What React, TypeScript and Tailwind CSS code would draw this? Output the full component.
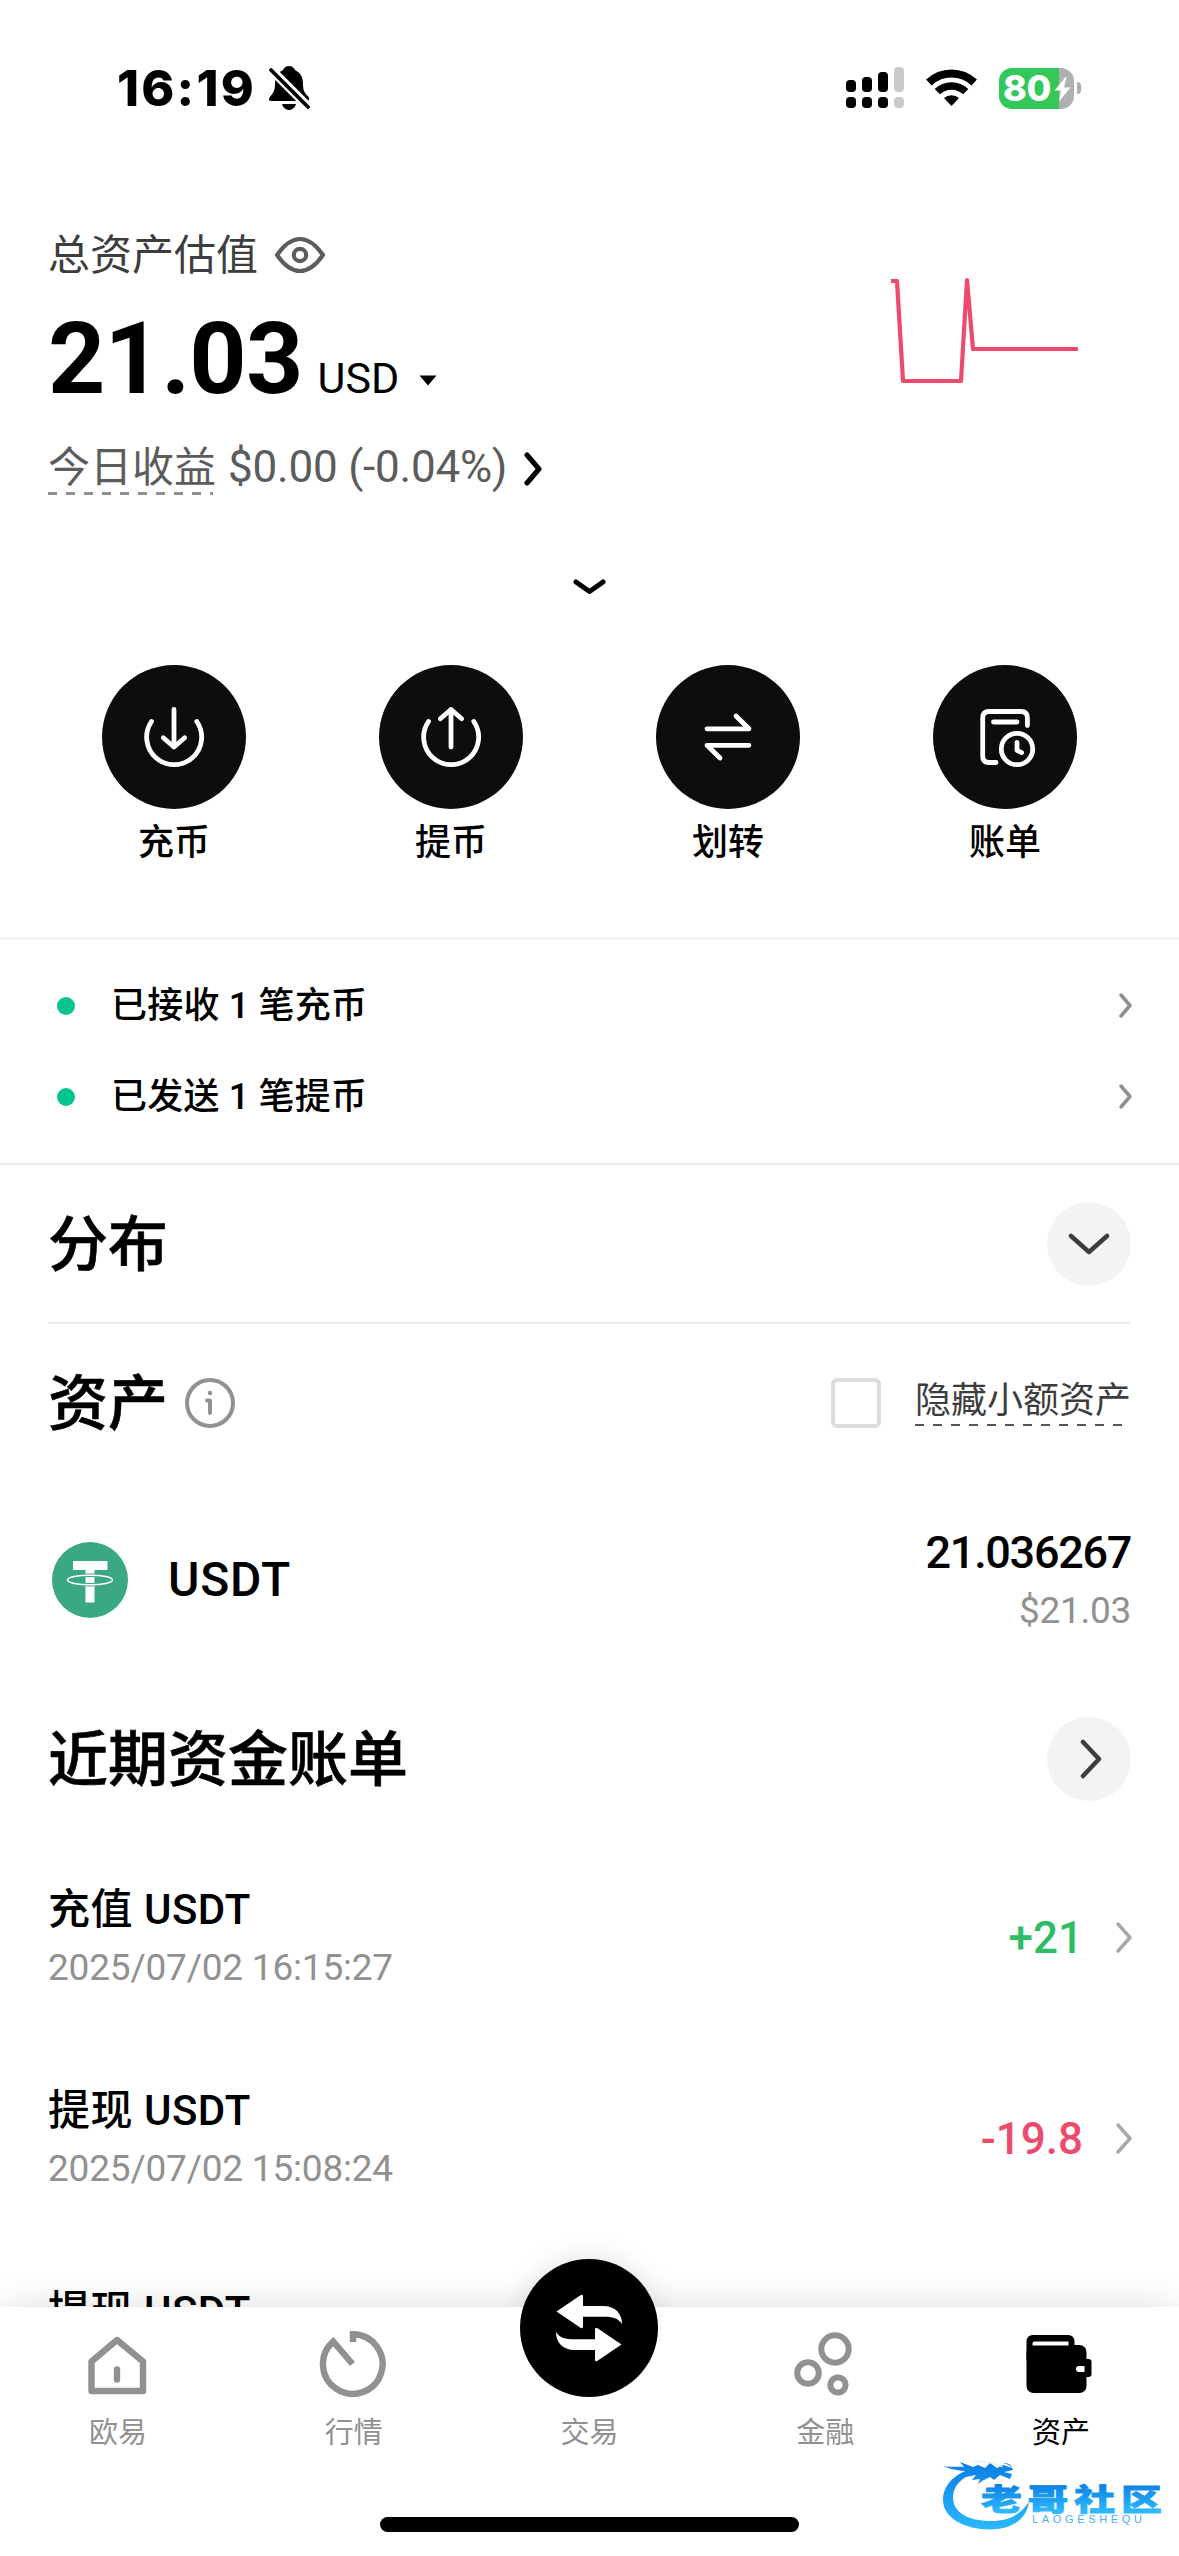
import { ReactNode } from "react";

const actions = [
    { label: "充币", icon: <DepositIcon /> },
    { label: "提币", icon: <WithdrawIcon /> },
    { label: "划转", icon: <TransferIcon /> },
    { label: "账单", icon: <BillIcon /> },
];

const notices = ["已接收 1 笔充币", "已发送 1 笔提币"];

const bills = [
    { title: "充值 USDT", time: "2025/07/02 16:15:27", amount: "+21", up: true },
    { title: "提现 USDT", time: "2025/07/02 15:08:24", amount: "-19.8", up: false },
    { title: "提现 USDT", time: "", amount: "", up: false },
];

function DepositIcon() {
    return (
        <svg width="144" height="144" viewBox="102 665 144 144" fill="none" stroke="#fff" strokeWidth="4.8" strokeLinecap="round" strokeLinejoin="round">
            <path d="M151.5 721.5A27.5 27.5 0 1 0 196.8 721.5" />
            <path d="M174 709.5V747M163.3 737.7L174 747L184.7 737.7" />
        </svg>
    );
}

function WithdrawIcon() {
    return (
        <svg width="144" height="144" viewBox="102 665 144 144" fill="none" stroke="#fff" strokeWidth="4.8" strokeLinecap="round" strokeLinejoin="round">
            <path d="M151.5 721.5A27.5 27.5 0 1 0 196.8 721.5" />
            <path d="M174 747V709.5M163.3 718.8L174 709.5L184.7 718.8" />
        </svg>
    );
}

function TransferIcon() {
    return (
        <svg width="144" height="144" viewBox="656 665 144 144" fill="none" stroke="#fff" strokeWidth="4.8" strokeLinecap="round" strokeLinejoin="round">
            <path d="M707 728.8H749L736 716M749 745.3H707L720 758" />
        </svg>
    );
}

function BillIcon() {
    return (
        <svg width="144" height="144" viewBox="933 665 144 144" fill="none" stroke="#fff" strokeWidth="4.8" strokeLinecap="round" strokeLinejoin="round">
            <path d="M996 762.5H989Q982.7 762.5 982.7 756V718Q982.7 711.5 989 711.5H1021Q1027.4 711.5 1027.4 718V725.5" />
            <path d="M993.5 722H1017" />
            <circle cx="1017" cy="749" r="15.7" />
            <path d="M1017 742.5V750.3L1021.6 752.7" />
        </svg>
    );
}

function Chevron({ width, height, className }: { width: number; height: number; className: string }) {
    // 3px of padding keeps the round caps inside the box
    return (
        <svg
            width={width}
            height={height}
            viewBox={`0 0 ${width} ${height}`}
            fill="none"
            stroke="currentColor"
            strokeLinecap="round"
            strokeLinejoin="round"
            className={className}
        >
            <path d={`M3 3L${width - 3} ${height / 2}L3 ${height - 3}`} />
        </svg>
    );
}

function StatusBar() {
    return (
        <div className="flex h-[176px] items-center justify-between pl-[117px] pr-[98px]">
            <div className="flex items-center">
                <span className="w-[151px] whitespace-nowrap font-['Inter',sans-serif] text-[50px] font-extrabold leading-none tracking-[2.2px]">16:19</span>
                <svg width="42" height="46" viewBox="268 65 42 46">
                    <path d="M289 66C286 66 284 68 282.5 70.5C277 73 275 78 275 84C275 91 273 93 270 97C268 99.500 269 101 272 101H306C309 101 310 99.500 308.500 97C305 93 303 91 303 84C303 78 301 73 295.500 70.500C294 68 292 66 289 66Z" />
                    <path d="M282 104H296C295 107.500 292 110 289 110S283 107.500 282 104Z" />
                    <path d="M268 66.500L311 109.500" stroke="#fff" strokeWidth="9" />
                    <path d="M271 70L308 107" stroke="#000" strokeWidth="3.800" strokeLinecap="round" />
                </svg>
            </div>
            <div className="flex items-center">
                <svg width="58" height="42" viewBox="846 67 58 42">
                    <rect x="846" y="80" width="10" height="12" rx="4" />
                    <rect x="862" y="77" width="10" height="15" rx="4" />
                    <rect x="878" y="72" width="10" height="20" rx="4" />
                    <rect x="894" y="67" width="10" height="25" rx="4" fill="#cbcbcb" />
                    <rect x="846" y="97" width="10" height="11" rx="4" />
                    <rect x="862" y="97" width="10" height="11" rx="4" />
                    <rect x="878" y="97" width="10" height="11" rx="4" />
                    <rect x="894" y="97" width="10" height="11" rx="4" fill="#cbcbcb" />
                </svg>
                <svg width="51" height="42" viewBox="926 67 51 42" fill="none" stroke="#000" className="ml-[22px]">
                    <path d="M928.800 82.500A33 33 0 0 1 974.200 82.500" strokeWidth="8" />
                    <path d="M937.300 91.600A20.500 20.500 0 0 1 965.700 91.600" strokeWidth="7.500" />
                    <path d="M951.500 106L944 98A11.500 11.500 0 0 1 959 98Z" fill="#000" stroke="none" />
                </svg>
                <div className="relative ml-[22px] flex h-[41px] w-[75px] items-center overflow-hidden rounded-[13px] bg-[linear-gradient(90deg,#34c759_60px,#b0b0b0_60px)] pl-[4px]">
                    <span className="font-['Inter',sans-serif] text-[36px] font-extrabold leading-none tracking-[-0.5px] text-white">80</span>
                    <svg width="17" height="26" viewBox="0 0 17 26" fill="#fff" className="absolute left-[55px] top-[8px]">
                        <path d="M11.500 1L0.500 14.500H7L5 25.500L16.500 11.500H10L12.500 1Z" />
                    </svg>
                </div>
                <div className="ml-[3px] h-[12px] w-[4px] rounded-r-full bg-[#b0b0b0]" />
            </div>
        </div>
    );
}

function Overview() {
    return (
        <div className="flex items-start justify-between px-12 pt-[51px]">
            <div>
                <div className="flex h-[56px] items-center text-[42px] text-[#3d3d3d]">
                    <span>总资产估值</span>
                    <svg width="52" height="40" viewBox="274 235 52 40" fill="none" stroke="#5c5c5c" strokeWidth="4.2" strokeLinejoin="round" className="ml-[16px]">
                        <path d="M277 255C284 245 292 239 300 239S316 245 323 255C316 265 308 271 300 271S284 265 277 255Z" />
                        <circle cx="300" cy="255" r="6.2" />
                    </svg>
                </div>
                <div className="mt-[26px] flex h-[100px] items-baseline">
                    <span className="text-[100px] font-bold leading-none tracking-[-0.8px]">21.03</span>
                    <span className="ml-[15px] text-[43px] leading-none">USD</span>
                    <svg width="18" height="11" viewBox="0 0 18 11" className="ml-[20px] mt-[66px] self-start">
                        <path d="M0.500 0.500H17.500L9 10.500Z" />
                    </svg>
                </div>
                <div className="mt-[28px] flex h-[60px] items-center text-[#5c5c5c]">
                    <span className="h-[55px] bg-[repeating-linear-gradient(90deg,#919191_0px,#919191_9px,transparent_9px,transparent_18px)] bg-[length:165px_3px] bg-bottom-left bg-no-repeat text-[42px] leading-[56px]">
                        今日收益
                    </span>
                    <span className="ml-[12px] text-[44px] leading-[56px] tracking-[-0.2px]">$0.00 (-0.04%)</span>
                    <Chevron width={18} height={34} className="ml-[17px] mt-[3px] stroke-[5] text-black" />
                </div>
            </div>
            <svg width="194" height="110" viewBox="888 277 194 110" fill="none" stroke="#ed4b6e" strokeWidth="4.200" strokeLinejoin="round" className="mr-[49px] mt-[50px]">
                <path d="M891 281H897L903 381H961L967 280L973 349H1078" />
            </svg>
        </div>
    );
}

function RoundButton({ children }: { children: ReactNode }) {
    return (
        <button className="flex size-[84px] items-center justify-center rounded-full bg-[#f3f3f3] text-[#3d3d3d]">
            {children}
        </button>
    );
}

function TabItem({ label, active, children }: { label: string; active?: boolean; children: ReactNode }) {
    return (
        <div className={active ? "flex flex-col items-center text-black" : "flex flex-col items-center text-[#919191]"}>
            <div className="flex h-[106px] items-start">{children}</div>
            <span className="text-[29px] leading-[40px]">{label}</span>
        </div>
    );
}

function TabBar() {
    return (
        <div className="absolute bottom-0 left-0 h-[249px] w-full">
            <div className="absolute inset-0 shadow-[0_0_40px_-4px_rgba(0,0,0,0.16)]" />
            {/* glow round the trade button */}
            <div className="absolute left-[520px] top-[-48px] size-[138px] rounded-full shadow-[0_0_30px_rgba(0,0,0,0.12)]" />
            <div className="relative h-full bg-white">
                <div className="grid grid-cols-5">
                    <TabItem label="欧易">
                        <svg width="66" height="72" viewBox="85 2328 66 72" fill="none" stroke="currentColor" strokeWidth="6.400" strokeLinejoin="round" className="mt-[21px]">
                            <path d="M117 2340L91.500 2361.500V2391H143V2361.500Z" />
                            <path d="M117 2369.500V2379.500" strokeLinecap="round" />
                        </svg>
                    </TabItem>
                    <TabItem label="行情">
                        <svg width="72" height="72" viewBox="318 2328 72 72" fill="none" stroke="currentColor" strokeWidth="6.400" className="mt-[21px]">
                            <path d="M353 2342V2334.200A29.800 29.800 0 1 1 333.200 2341.500L352.500 2364" />
                        </svg>
                    </TabItem>
                    <TabItem label="交易">
                        <svg width="138" height="138" viewBox="520 2259 138 138" className="relative mt-[-48px]">
                            <circle cx="589" cy="2328" r="69" fill="#000" />
                            <g fill="#fff">
                                <path d="M556.500 2311.500L580.500 2295.300Q583 2293.500 583 2296.500V2306H603C616 2306 622 2314 622 2324C618 2318 613 2316.700 603 2316.700H583V2326Q583 2329.500 580.500 2327.700Z" />
                                <path d="M621.500 2344.500L597.500 2360.700Q595 2362.500 595 2359.500V2350H575C562 2350 556 2342 556 2332C560 2338 565 2339.300 575 2339.300H595V2330Q595 2326.500 597.500 2328.300Z" />
                            </g>
                        </svg>
                    </TabItem>
                    <TabItem label="金融">
                        <svg width="72" height="72" viewBox="790 2328 72 72" fill="none" stroke="currentColor" strokeWidth="6" className="mt-[21px]">
                            <circle cx="836" cy="2349" r="13.700" />
                            <circle cx="809" cy="2373" r="10.800" />
                            <circle cx="839" cy="2385" r="7.600" />
                        </svg>
                    </TabItem>
                    <TabItem label="资产" active>
                        <svg width="72" height="72" viewBox="1025.500 2328 72 72" className="mt-[21px]">
                            <rect x="1027" y="2335" width="48" height="30" rx="6" />
                            <rect x="1027" y="2345" width="60" height="48" rx="7" />
                            <path d="M1035 2341.500H1069V2345.500H1033V2343.500Q1033 2341.500 1035 2341.500Z" fill="#fff" />
                            <rect x="1077" y="2359" width="15" height="18" rx="3" />
                            <path d="M1079.500 2366H1085V2372H1079.500A3 3 0 0 1 1079.500 2366Z" fill="#fff" />
                        </svg>
                    </TabItem>
                </div>
                <div className="mx-auto mt-[64px] h-[15px] w-[419px] rounded-full bg-black" />
            </div>
            <Community />
        </div>
    );
}

function Community() {
    return (
        <svg width="226" height="80" viewBox="938 2452 226 80" className="absolute bottom-[24px] right-[15px]">
            <defs>
                <linearGradient id="ring" gradientUnits="userSpaceOnUse" x1="0" y1="2462" x2="0" y2="2530">
                    <stop offset="0" stopColor="#0b7ee3" />
                    <stop offset="1" stopColor="#2cbaff" />
                </linearGradient>
                {/* the word's own box, from cap line to baseline */}
                <linearGradient id="word" gradientUnits="userSpaceOnUse" x1="0" y1="-27" x2="0" y2="2">
                    <stop offset="0" stopColor="#0b7ee3" />
                    <stop offset="1" stopColor="#2cb8ff" />
                </linearGradient>
            </defs>
            <g fill="url(#ring)">
                <path d="M978 2467C955 2472 943 2485 943 2500C943 2518 965 2529.500 990 2529.500C1010 2529.500 1026 2521 1029 2502C1019 2516 1008 2521 991 2521C968 2521 953 2512 953 2498C953 2485 962 2477 976 2473Z" />
                <path d="M941 2465C948 2468 956 2466 964 2467L960 2462L973 2467L978 2465L985 2468L990 2463L997 2468L1003 2465L1012 2468Q1009 2464 1003 2463Q1011 2462 1013 2470L1004 2472L1012 2474L1010 2479L1000 2475L994 2480L990 2477L982 2481L978 2484L980 2479L972 2480L976 2475L966 2477L973 2471Q955 2472 941 2465Z" />
            </g>
            <path d="M973 2463C982 2459 994 2464 1003 2467" fill="none" stroke="#d5ebfb" strokeWidth="1" />
            <text
                transform="translate(981 2509.500) scale(1.32 0.960)"
                textLength="137"
                lengthAdjust="spacing"
                fill="url(#word)"
                stroke="url(#word)"
                strokeWidth="0.8"
                className="font-['Noto_Sans_CJK_SC',sans-serif] text-[31px] font-black"
            >
                老哥社区
            </text>
            <text x="1032" y="2523" textLength="110" lengthAdjust="spacing" fill="#4aaef0" className="font-['Liberation_Sans',sans-serif] text-[11px]">
                LAOGESHEQU
            </text>
        </svg>
    );
}

function App() {
    return (
        <div className="relative h-[2556px] w-[1179px] overflow-hidden bg-white font-['Roboto','Noto_Sans_CJK_SC',sans-serif] text-black">
            <StatusBar />
            <Overview />

            <div className="mt-[80px] flex justify-center">
                <svg width="34" height="20" viewBox="572 577 34 20" fill="none" stroke="#000" strokeWidth="5" strokeLinecap="round" strokeLinejoin="round">
                    <path d="M575 582L588.500 591.500L602 582" />
                </svg>
            </div>

            <div className="mt-[68px] grid grid-cols-4 px-[35.5px]">
                {actions.map((item) => (
                    <div key={item.label} className="flex flex-col items-center">
                        <div className="size-[144px] rounded-full bg-[#0d0d0d]">{item.icon}</div>
                        <span className="mt-[8px] text-[36px] font-medium leading-[52px]">{item.label}</span>
                    </div>
                ))}
            </div>

            {/* Notices */}
            <div className="mt-[69px] border-b-2 border-t border-[#ebebeb] py-[21px] pl-[57px] pr-[46px]">
                {notices.map((text) => (
                    <div key={text} className="flex h-[91px] items-center">
                        <div className="size-[18px] rounded-full bg-[#05c48f]" />
                        <span className="ml-[36px] grow text-[36px] font-medium tracking-[0.2px]">{text}</span>
                        <Chevron width={15} height={27} className="stroke-[3.5] text-[#8f8f8f]" />
                    </div>
                ))}
            </div>

            <div className="px-12">
                <div className="flex h-[159px] items-center justify-between border-b-2 border-[#ebebeb]">
                    <h2 className="pt-[4px] text-[60px] font-medium leading-none [-webkit-text-stroke:0.6px_black]">分布</h2>
                    <RoundButton>
                        <Chevron width={22} height={42} className="rotate-90 stroke-[4.5]" />
                    </RoundButton>
                </div>

                <div className="flex h-[157px] items-center justify-between">
                    <div className="flex items-center">
                        <h2 className="pt-[4px] text-[60px] font-medium leading-none [-webkit-text-stroke:0.6px_black]">资产</h2>
                        <svg width="52" height="52" viewBox="0 0 52 52" fill="none" stroke="#919191" strokeWidth="4" strokeLinecap="round" strokeLinejoin="round" className="ml-[16px]">
                            <circle cx="26" cy="26" r="23" />
                            <path d="M23 23.500H26V36" />
                            <circle cx="26" cy="16" r="2.200" fill="#919191" stroke="none" />
                        </svg>
                    </div>
                    <div className="flex items-center">
                        <div className="size-[50px] rounded-[6px] border-4 border-[#dcdcdc]" />
                        <span className="mb-[4px] ml-[34px] h-[51px] bg-[repeating-linear-gradient(90deg,#555_0px,#555_9px,transparent_9px,transparent_18px)] bg-[length:207px_2px] bg-bottom-left bg-no-repeat text-[36px] leading-[52px] text-[#3d3d3d]">
                            隐藏小额资产
                        </span>
                    </div>
                </div>

                <div className="flex h-[198px] items-center">
                    <svg width="76" height="76" viewBox="51 1542 76 76" className="ml-[4px]">
                        <circle cx="89" cy="1580" r="38" fill="#3aa882" />
                        <path d="M72 1561H106.500V1570H93.500V1602.500H84.500V1570H72Z" fill="#fff" />
                        <ellipse cx="89" cy="1580" rx="22.500" ry="4.800" fill="none" stroke="#3aa882" strokeWidth="3.500" />
                        <ellipse cx="89" cy="1580" rx="22.500" ry="4.800" fill="none" stroke="#fff" strokeWidth="1.500" />
                    </svg>
                    <span className="ml-[40px] grow text-[48px] font-medium leading-none tracking-[0.8px]">USDT</span>
                    <div className="flex flex-col items-end pt-[3px]">
                        <span className="text-[45px] font-medium leading-[58px] tracking-[-1.3px]">21.036267</span>
                        <span className="text-[37px] leading-[58px] tracking-[-0.3px] text-[#919191]">$21.03</span>
                    </div>
                </div>

                <div className="flex h-[159px] items-center justify-between">
                    <h2 className="pt-[4px] text-[60px] font-medium leading-none [-webkit-text-stroke:0.6px_black]">近期资金账单</h2>
                    <RoundButton>
                        <Chevron width={22} height={40} className="ml-[4px] stroke-[4.5]" />
                    </RoundButton>
                </div>

                {bills.map((bill, index) => (
                    <div key={index} className="flex h-[201px] items-center">
                        <div className="flex grow flex-col pt-[1px]">
                            <span className="text-[42px] font-medium leading-[58px] tracking-[0.5px]">{bill.title}</span>
                            <span className="h-[58px] text-[37px] leading-[58px] tracking-[-0.2px] text-[#919191]">{bill.time}</span>
                        </div>
                        <span className={bill.up ? "mb-[2px] text-[44px] font-medium text-[#2ebd65]" : "mb-[2px] text-[44px] font-medium text-[#ed4b6e]"}>
                            {bill.amount}
                        </span>
                        <Chevron width={18} height={33} className="-mr-[2px] mb-[2px] ml-[32px] stroke-[3.5] text-[#a8a8a8]" />
                    </div>
                ))}
            </div>

            <TabBar />
        </div>
    );
}

export default App;
